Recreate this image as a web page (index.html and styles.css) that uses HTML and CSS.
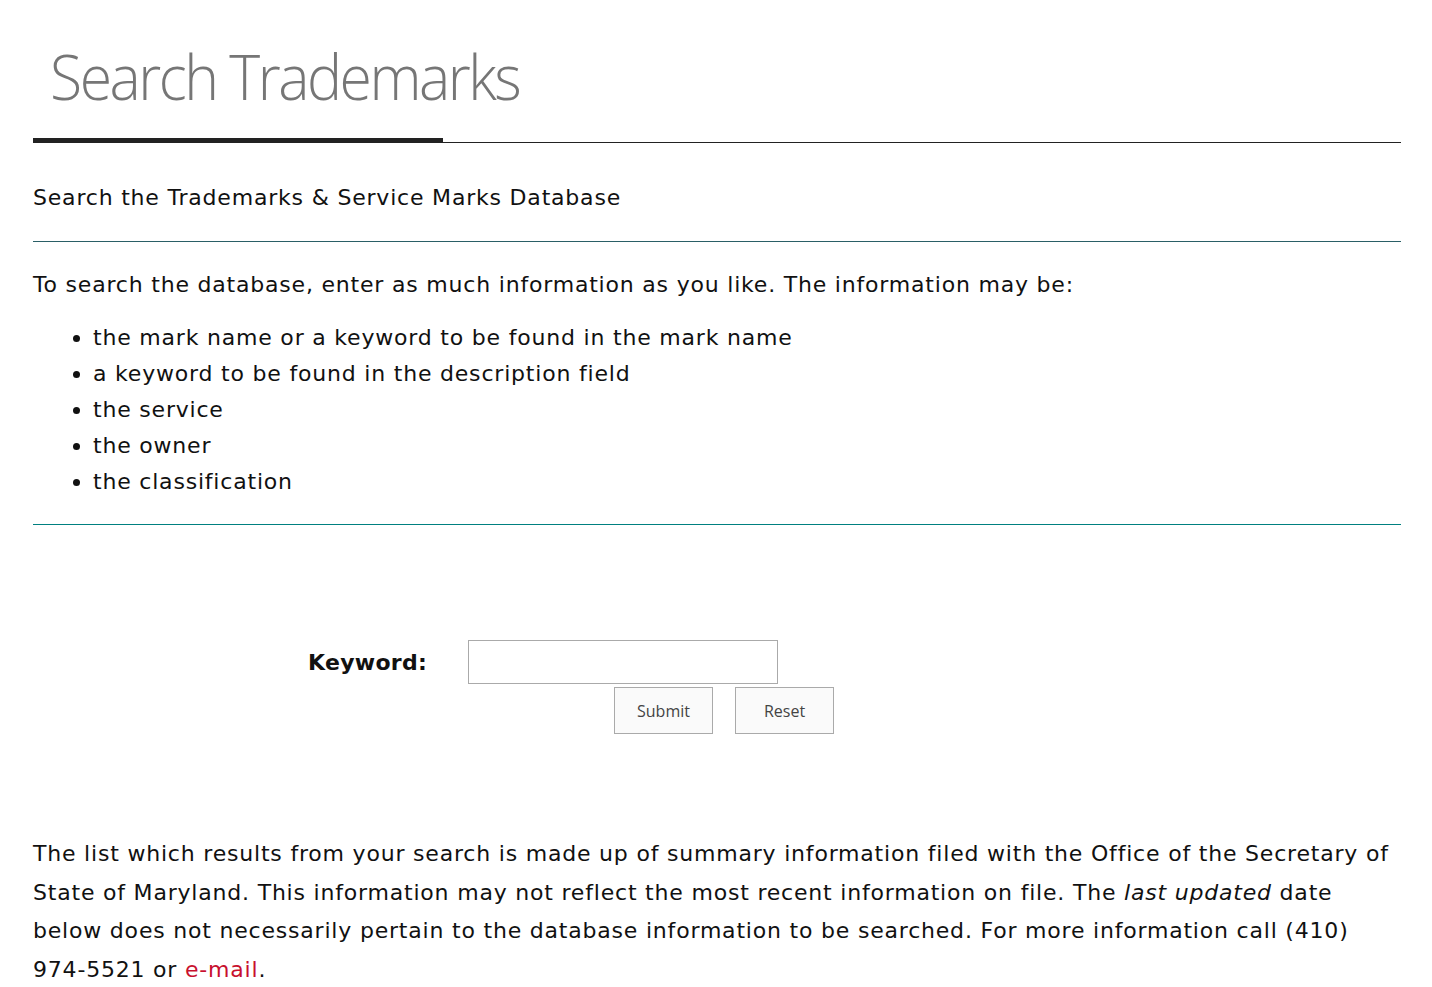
FILE: index.html
```html
<!DOCTYPE html>
<html lang="en">
<head>
  <meta charset="UTF-8">
  <meta name="viewport" content="width=device-width, initial-scale=1.0">
  <title>Search Trademarks</title>
  <link rel="stylesheet" href="styles.css">
</head>
<body>
  <div class="page">
    <h1 class="page-title">Search Trademarks</h1>
    <div class="title-rule"><span class="title-rule-bar"></span></div>

    <h2 class="subtitle">Search the Trademarks &amp; Service Marks Database</h2>

    <div class="intro">
      <p>To search the database, enter as much information as you like. The information may be:</p>
      <ul class="fields">
        <li>the mark name or a keyword to be found in the mark name</li>
        <li>a keyword to be found in the description field</li>
        <li>the service</li>
        <li>the owner</li>
        <li>the classification</li>
      </ul>
    </div>

    <form class="search-form" onsubmit="return false;">
      <div class="form-row">
        <label for="keyword" class="form-label">Keyword:</label>
        <input type="text" id="keyword" class="form-input">
      </div>
      <div class="form-buttons">
        <button type="submit" class="btn">Submit</button>
        <button type="reset" class="btn">Reset</button>
      </div>
    </form>

    <p class="note">The list which results from your search is made up of summary information filed with the Office of the Secretary of State of Maryland. This information may not reflect the most recent information on file. The <em>last updated</em> date below does not necessarily pertain to the database information to be searched. For more information call (410) 974-5521 or <a href="#" class="mail-link">e-mail</a>.</p>
  </div>
</body>
</html>
```

FILE: styles.css
```css
body {
  margin: 0;
  font-family: "DejaVu Sans", sans-serif;
  font-size: 22px;
  letter-spacing: 0.8px;
  color: #111;
  background: #fff;
}

.page {
  margin: 0 31px 0 33px;
}

.page-title {
  margin: 0;
  padding: 38px 0 0 17px;
  font-family: "Open Sans", sans-serif;
  font-weight: 300;
  font-size: 62px;
  letter-spacing: -2.6px;
  line-height: 76px;
  color: #767676;
  transform: scaleX(0.95);
  transform-origin: 17px 0;
}

.title-rule {
  margin-top: 24px;
  height: 4px;
  border-bottom: 1px solid #222;
  position: relative;
}

.title-rule-bar {
  position: absolute;
  left: 0;
  top: 0;
  width: 410px;
  height: 5px;
  background: #222;
}

.subtitle {
  margin: 0;
  padding: 40px 0 28px;
  font-size: 22px;
  font-weight: 400;
  line-height: 30px;
  border-bottom: 1px solid #2a5f66;
}

.intro {
  padding: 28px 0 24px;
  border-bottom: 1px solid #008080;
}

.intro p {
  margin: 0 0 20px;
  line-height: 30px;
}

.fields {
  margin: 0;
  padding-left: 60px;
}

.fields li {
  line-height: 36px;
}

.search-form {
  padding: 115px 0 0;
}

.form-row {
  display: flex;
  align-items: center;
}

.form-label {
  width: 160px;
  margin-left: 275px;
  font-weight: 700;
  letter-spacing: 0.3px;
}

.form-input {
  width: 310px;
  height: 44px;
  box-sizing: border-box;
  border: 1px solid #aaa;
  margin: 0;
}

.form-buttons {
  display: flex;
  gap: 22px;
  margin: 3px 0 0 581px;
}

.btn {
  width: 99px;
  height: 47px;
  background: #fafafa;
  border: 1px solid #aaa;
  color: #444;
  font-family: "Open Sans", sans-serif;
  font-size: 16px;
  letter-spacing: 0;
  cursor: pointer;
}

.note {
  margin: 101px 0 0;
  line-height: 38.5px;
}

.mail-link {
  color: #c8102e;
  text-decoration: none;
}
```
